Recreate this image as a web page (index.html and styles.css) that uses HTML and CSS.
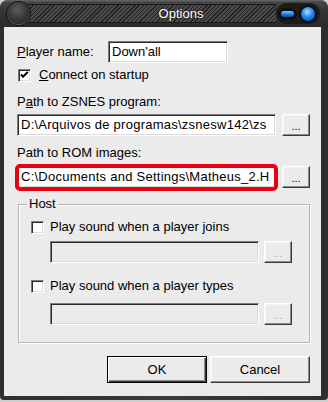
FILE: index.html
```html
<!DOCTYPE html>
<html>
<head>
<meta charset="utf-8">
<title>Options</title>
<link rel="stylesheet" href="styles.css">
</head>
<body>
<div class="window">
  <div class="titlebar">
    <span class="orb"></span>
    <div class="band"><span class="title">Options</span></div>
    <div class="ctrls">
      <span class="pill"><span class="pill-in"></span></span>
      <span class="ball"><span class="ball-in"></span></span>
    </div>
  </div>
  <div class="client">
    <div class="row name-row">
      <span class="name-lbl"><u>P</u>layer name:</span>
      <div class="field name">Down'all</div>
    </div>
    <div class="chk-row top-chk">
      <span class="chk"><svg width="13" height="13" viewBox="0 0 13 13"><polyline points="3,5.5 5,7.8 9.8,3" fill="none" stroke="#000" stroke-width="2"/></svg></span>
      <span><u>C</u>onnect on startup</span>
    </div>
    <div class="lbl-line l1">P<u>a</u>th to ZSNES program:</div>
    <div class="row path-row r1">
      <div class="field wide">D:\Arquivos de programas\zsnesw142\zs</div>
      <div class="btn small">...</div>
    </div>
    <div class="lbl-line l2">Path to ROM images:</div>
    <div class="row path-row r2">
      <div class="hl"><div class="field wide">C:\Documents and Settings\Matheus_2.H</div></div>
      <div class="btn small">...</div>
    </div>
    <fieldset class="group">
      <legend>Host</legend>
      <div class="chk-row">
        <span class="chk"></span>
        <span>Play sound when a player joins</span>
      </div>
      <div class="row sub-row s1">
        <div class="field sub disabled"></div>
        <div class="btn small disabled">...</div>
      </div>
      <div class="chk-row c2">
        <span class="chk"></span>
        <span>Play sound when a player types</span>
      </div>
      <div class="row sub-row s2">
        <div class="field sub disabled"></div>
        <div class="btn small disabled">...</div>
      </div>
    </fieldset>
    <div class="actions">
      <div class="btn big def">OK</div>
      <div class="btn big">Cancel</div>
    </div>
  </div>
</div>
</body>
</html>
```

FILE: styles.css
```css
html, body {
  margin: 0;
  padding: 0;
  background: #cfcfcf;
}
.window {
  width: 328px;
  height: 400px;
  display: flex;
  flex-direction: column;
  background: linear-gradient(90deg, #2e2e2e, #3a3a3a 50%, #2e2e2e);
  border-radius: 8px 8px 4px 4px;
  font-family: "Liberation Sans", Arial, sans-serif;
  font-size: 13px;
  color: #000;
  overflow: hidden;
}
.titlebar {
  height: 27px;
  flex: none;
  display: flex;
  align-items: flex-start;
  background: linear-gradient(#6a6a6a 0, #474747 2px, #363636 10px, #2a2a2a 100%);
}
.orb {
  flex: none;
  width: 23px;
  height: 23px;
  margin: 2px 0 0 7px;
  border-radius: 50%;
  background: radial-gradient(circle at 45% 35%, #5c5c5c 0, #3a3a3a 45%, #1c1c1c 100%);
  box-shadow: 0 0 0 1px #151515, inset 0 -1px 1px #555;
  position: relative;
  z-index: 1;
}
.band {
  flex: 1;
  height: 19px;
  margin-top: 4px;
  margin-left: -2px;
  display: flex;
  align-items: center;
  justify-content: center;
  padding-left: 58px;
  background: repeating-linear-gradient(-45deg, #222 0 1px, #4a4a4a 1px 3px);
  border-top: 1px solid #1a1a1a;
  border-bottom: 1px solid #1a1a1a;
  box-sizing: border-box;
}
.title {
  color: #fff;
  font-size: 13px;
  line-height: 17px;
  text-shadow: 0 0 2px #000;
}
.ctrls {
  flex: none;
  width: 44px;
  height: 21px;
  margin: 3px 8px 0 0;
  display: flex;
  align-items: center;
  gap: 2px;
  padding-left: 2px;
  box-sizing: border-box;
  background: #1c1c1c;
  border-radius: 10px;
}
.pill {
  width: 19px;
  height: 12px;
  border-radius: 6px;
  background: #111;
  display: flex;
  align-items: center;
  justify-content: center;
}
.pill-in {
  width: 13px;
  height: 6px;
  border-radius: 3px;
  background: linear-gradient(#7cc4ff, #1a78e0 60%, #0b4aa0);
}
.ball {
  width: 18px;
  height: 18px;
  border-radius: 50%;
  background: #0e0e0e;
  display: flex;
  align-items: center;
  justify-content: center;
}
.ball-in {
  width: 14px;
  height: 14px;
  border-radius: 50%;
  background: radial-gradient(circle at 45% 35%, #b8e2ff 0, #2a92f0 40%, #0b56c0 80%, #073a88 100%);
}
.client {
  flex: 1;
  margin: 0 7px 4px 4px;
  background: #ebebeb;
  padding: 14px 11px 0 13px;
  box-sizing: border-box;
  display: flex;
  flex-direction: column;
  align-items: flex-start;
}
.row {
  display: flex;
  align-items: center;
}
.name-lbl {
  width: 91px;
  line-height: 16px;
}
.field {
  height: 22px;
  box-sizing: border-box;
  border: 1px solid;
  border-color: #7d7d7d #fff #fff #7d7d7d;
  box-shadow: inset 1px 1px #2b2b2b, inset -1px -1px #dcdcdc;
  background: #fff;
  padding: 1px 3px 0 3px;
  line-height: 18px;
  white-space: nowrap;
  overflow: hidden;
}
.field.name { width: 120px; }
.field.wide { width: 259px; letter-spacing: 0.25px; }
.field.sub { width: 209px; }
.field.disabled { background: #ebebeb; }
.chk-row {
  display: flex;
  align-items: center;
  height: 16px;
  line-height: 16px;
}
.top-chk {
  margin-top: 4px;
  margin-left: 1px;
  gap: 8px;
}
.chk {
  width: 13px;
  height: 13px;
  flex: none;
  box-sizing: border-box;
  background: #fff;
  border: 1px solid;
  border-color: #7d7d7d #fff #fff #7d7d7d;
  box-shadow: inset 1px 1px #2b2b2b, inset -1px -1px #dcdcdc;
  display: flex;
  align-items: center;
  justify-content: center;
  overflow: hidden;
}
.chk svg {
  flex: none;
}
.lbl-line {
  line-height: 16px;
}
.l1 { margin-top: 11px; }
.l2 { margin-top: 9px; }
.path-row { gap: 6px; }
.r1 { margin-top: 4px; }
.r2 { margin-top: 5px; }
.hl {
  position: relative;
}
.hl::after {
  content: "";
  position: absolute;
  left: -2px;
  right: -2px;
  top: -2px;
  bottom: -3px;
  border: 4px solid #e60010;
  border-radius: 5px;
  pointer-events: none;
}
.btn {
  box-sizing: border-box;
  display: flex;
  align-items: center;
  justify-content: center;
  background: #ebebeb;
  border: 1px solid;
  border-color: #fff #3a3a3a #3a3a3a #fff;
  box-shadow: inset -1px -1px #8a8a8a, inset 1px 1px #f4f4f4;
}
.btn.small {
  width: 28px;
  height: 22px;
  font-size: 11px;
  line-height: 11px;
  padding-top: 2px;
}
.btn.disabled {
  color: #a8a8a8;
  text-shadow: 1px 1px #fff;
}
.group {
  margin: 8px 0 0 1px;
  width: 292px;
  box-sizing: border-box;
  padding: 7px 0 17px 12px;
  border: 1px solid #b4b4b4;
  box-shadow: inset 1px 1px #fff, 1px 1px #fff;
  min-inline-size: 0;
}
.group legend {
  padding: 0 2px;
  margin-left: -4px;
  line-height: 16px;
  height: 16px;
  background: #ebebeb;
}
.group .chk-row { gap: 6px; }
.sub-row {
  margin-left: 19px;
  gap: 5px;
}
.s1 { margin-top: 6px; }
.c2 { margin-top: 15px; }
.s2 { margin-top: 9px; }
.actions {
  align-self: stretch;
  margin-top: 13px;
  display: flex;
  justify-content: flex-end;
  gap: 3px;
}
.btn.big {
  width: 100px;
  height: 27px;
  font-size: 13px;
}
.btn.def {
  border-color: #000;
  box-shadow: inset 1px 1px #fff, inset -1px -1px #3a3a3a, inset -2px -2px #8a8a8a;
}
```
